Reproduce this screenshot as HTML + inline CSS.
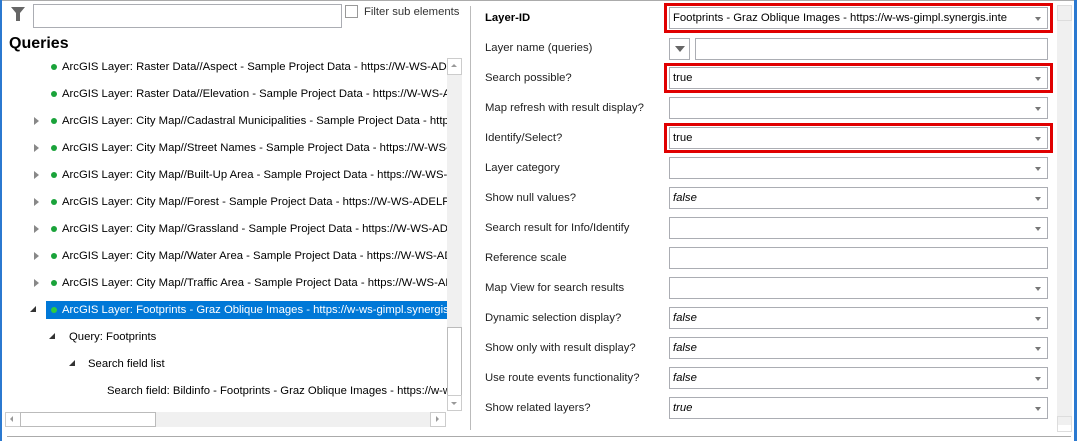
<!DOCTYPE html>
<html><head><style>
*{box-sizing:border-box;margin:0;padding:0}
body{width:1077px;height:441px;background:#fff;position:relative;overflow:hidden;font-family:"Liberation Sans",sans-serif;font-size:11.3px;color:#000}
.a{position:absolute}
.t{position:absolute;white-space:nowrap;font-size:11.3px;line-height:14px}
.dot{position:absolute;width:6px;height:6px;border-radius:3px;background:#1aa33a}
.exp{position:absolute;width:0;height:0;border-top:4px solid transparent;border-bottom:4px solid transparent;border-left:5px solid #888}
.tri{position:absolute;width:0;height:0;border-left:6px solid transparent;border-bottom:6px solid #333}
.box{position:absolute;left:669px;width:379px;height:22px;border:1px solid #abadb3;background:#fff}
.box .v{position:absolute;left:3px;top:3px;font-size:11.3px;line-height:14px;white-space:nowrap}
.box .ar{position:absolute;right:6px;top:9px;border-left:3px solid transparent;border-right:3px solid transparent;border-top:4px solid #777}
.lab{position:absolute;left:485px;font-size:11.3px;line-height:14px;color:#222}
.red{position:absolute;left:664px;width:389px;height:30px;border:3px solid #e00000}
</style></head><body>
<div class="a" style="left:0;top:0;width:1077px;height:1px;background:#ababab"></div>
<div class="a" style="left:0;top:0;width:2px;height:441px;background:#2b79d0"></div>
<div class="a" style="left:1074px;top:0;width:3px;height:441px;background:#2b79d0"></div>
<div class="a" style="left:7px;top:436px;width:1064px;height:1px;background:#ababab"></div>
<div class="a" style="left:470px;top:6px;width:1px;height:424px;background:#bbb"></div>
<svg class="a" style="left:10px;top:6px" width="16" height="16"><path d="M1 1H15L10 7V15H6V7Z" fill="#666"/></svg>
<div class="a" style="left:33px;top:4px;width:309px;height:24px;border:1px solid #abadb3"></div>
<div class="a" style="left:345px;top:5px;width:13px;height:13px;border:1px solid #999"></div>
<div class="t" style="left:364px;top:5px;color:#333">Filter sub elements</div>
<div class="t" style="left:9px;top:35px;font-size:16px;line-height:18px;font-weight:bold">Queries</div>
<div class="a" style="left:7px;top:55px;width:440px;height:356px;overflow:hidden">
<div class="dot" style="left:44px;top:9px"></div><div class="t" style="left:55px;top:5px">ArcGIS Layer: Raster Data//Aspect - Sample Project Data - https://W-WS-ADELPO</div>
<div class="dot" style="left:44px;top:36px"></div><div class="t" style="left:55px;top:32px">ArcGIS Layer: Raster Data//Elevation - Sample Project Data - https://W-WS-ADELPO</div>
<div class="exp" style="left:27px;top:62px"></div><div class="dot" style="left:44px;top:63px"></div><div class="t" style="left:55px;top:59px">ArcGIS Layer: City Map//Cadastral Municipalities - Sample Project Data - https://W</div>
<div class="exp" style="left:27px;top:89px"></div><div class="dot" style="left:44px;top:90px"></div><div class="t" style="left:55px;top:86px">ArcGIS Layer: City Map//Street Names - Sample Project Data - https://W-WS-ADELPO</div>
<div class="exp" style="left:27px;top:116px"></div><div class="dot" style="left:44px;top:117px"></div><div class="t" style="left:55px;top:113px">ArcGIS Layer: City Map//Built-Up Area - Sample Project Data - https://W-WS-ADELPO</div>
<div class="exp" style="left:27px;top:143px"></div><div class="dot" style="left:44px;top:144px"></div><div class="t" style="left:55px;top:140px">ArcGIS Layer: City Map//Forest - Sample Project Data - https://W-WS-ADELPO</div>
<div class="exp" style="left:27px;top:170px"></div><div class="dot" style="left:44px;top:171px"></div><div class="t" style="left:55px;top:167px">ArcGIS Layer: City Map//Grassland - Sample Project Data - https://W-WS-ADELPO</div>
<div class="exp" style="left:27px;top:197px"></div><div class="dot" style="left:44px;top:198px"></div><div class="t" style="left:55px;top:194px">ArcGIS Layer: City Map//Water Area - Sample Project Data - https://W-WS-ADELPO</div>
<div class="exp" style="left:27px;top:224px"></div><div class="dot" style="left:44px;top:225px"></div><div class="t" style="left:55px;top:221px">ArcGIS Layer: City Map//Traffic Area - Sample Project Data - https://W-WS-ADELPO</div>
<div class="tri" style="left:23px;top:251px"></div>
<div class="a" style="left:39px;top:246px;width:401px;height:18px;background:#0078d7"></div>
<div class="dot" style="left:44px;top:252px;background:#2ecc40"></div><div class="t" style="left:55px;top:248px;color:#fff">ArcGIS Layer: Footprints - Graz Oblique Images - https://w-ws-gimpl.synergis.int</div>
<div class="tri" style="left:42px;top:278px"></div><div class="t" style="left:62px;top:275px">Query: Footprints</div>
<div class="tri" style="left:62px;top:305px"></div><div class="t" style="left:81px;top:302px">Search field list</div>
<div class="t" style="left:100px;top:329px">Search field: Bildinfo - Footprints - Graz Oblique Images - https://w-ws</div>
</div>
<div class="a" style="left:447px;top:58px;width:15px;height:353px;background:#f0f0f0"></div>
<div class="a" style="left:447px;top:58px;width:15px;height:17px;border:1px solid #ccc;background:#fff"></div>
<div class="a" style="left:451px;top:64px;border-left:3px solid transparent;border-right:3px solid transparent;border-bottom:3px solid #999"></div>
<div class="a" style="left:447px;top:327px;width:15px;height:70px;border:1px solid #bbb;background:#fff"></div>
<div class="a" style="left:447px;top:395px;width:15px;height:16px;border:1px solid #ccc;background:#fff"></div>
<div class="a" style="left:451px;top:402px;border-left:3px solid transparent;border-right:3px solid transparent;border-top:3px solid #999"></div>
<div class="a" style="left:5px;top:412px;width:441px;height:15px;background:#f0f0f0"></div>
<div class="a" style="left:5px;top:412px;width:16px;height:15px;border:1px solid #ccc;background:#fff"></div>
<div class="a" style="left:10px;top:416px;border-top:3px solid transparent;border-bottom:3px solid transparent;border-right:3px solid #999"></div>
<div class="a" style="left:20px;top:412px;width:136px;height:15px;border:1px solid #bbb;background:#fff"></div>
<div class="a" style="left:430px;top:412px;width:16px;height:15px;border:1px solid #ccc;background:#fff"></div>
<div class="a" style="left:436px;top:416px;border-top:3px solid transparent;border-bottom:3px solid transparent;border-left:3px solid #999"></div>
<div class="a" style="left:1057px;top:5px;width:15px;height:420px;background:#f0f0f0"></div>
<div class="a" style="left:1057px;top:5px;width:15px;height:16px;border:1px solid #ddd"></div>
<div class="a" style="left:1057px;top:416px;width:15px;height:16px;border:1px solid #ddd"></div>
<div class="lab" style="top:11px;font-weight:bold;color:#000">Layer-ID</div>
<div class="box" style="top:7px"><span class="v">Footprints - Graz Oblique Images - https://w-ws-gimpl.synergis.inte</span><span class="ar"></span></div>
<div class="red" style="top:3px"></div>
<div class="lab" style="top:41px">Layer name (queries)</div>
<div class="a" style="left:669px;top:38px;width:21px;height:22px;border:1px solid #abadb3"></div>
<div class="a" style="left:675px;top:46px;border-left:5px solid transparent;border-right:5px solid transparent;border-top:6px solid #666"></div>
<div class="a" style="left:695px;top:38px;width:353px;height:22px;border:1px solid #abadb3"></div>
<div class="lab" style="top:71px">Search possible?</div>
<div class="box" style="top:67px"><span class="v">true</span><span class="ar"></span></div>
<div class="red" style="top:63px"></div>
<div class="lab" style="top:101px">Map refresh with result display?</div>
<div class="box" style="top:97px"><span class="ar"></span></div>
<div class="lab" style="top:131px">Identify/Select?</div>
<div class="box" style="top:127px"><span class="v">true</span><span class="ar"></span></div>
<div class="red" style="top:123px"></div>
<div class="lab" style="top:161px">Layer category</div>
<div class="box" style="top:157px"><span class="ar"></span></div>
<div class="lab" style="top:191px">Show null values?</div>
<div class="box" style="top:187px"><span class="v" style="font-style:italic">false</span><span class="ar"></span></div>
<div class="lab" style="top:221px">Search result for Info/Identify</div>
<div class="box" style="top:217px"><span class="ar"></span></div>
<div class="lab" style="top:251px">Reference scale</div>
<div class="box" style="top:247px"></div>
<div class="lab" style="top:281px">Map View for search results</div>
<div class="box" style="top:277px"><span class="ar"></span></div>
<div class="lab" style="top:311px">Dynamic selection display?</div>
<div class="box" style="top:307px"><span class="v" style="font-style:italic">false</span><span class="ar"></span></div>
<div class="lab" style="top:341px">Show only with result display?</div>
<div class="box" style="top:337px"><span class="v" style="font-style:italic">false</span><span class="ar"></span></div>
<div class="lab" style="top:371px">Use route events functionality?</div>
<div class="box" style="top:367px"><span class="v" style="font-style:italic">false</span><span class="ar"></span></div>
<div class="lab" style="top:401px">Show related layers?</div>
<div class="box" style="top:397px"><span class="v" style="font-style:italic">true</span><span class="ar"></span></div>
</body></html>
